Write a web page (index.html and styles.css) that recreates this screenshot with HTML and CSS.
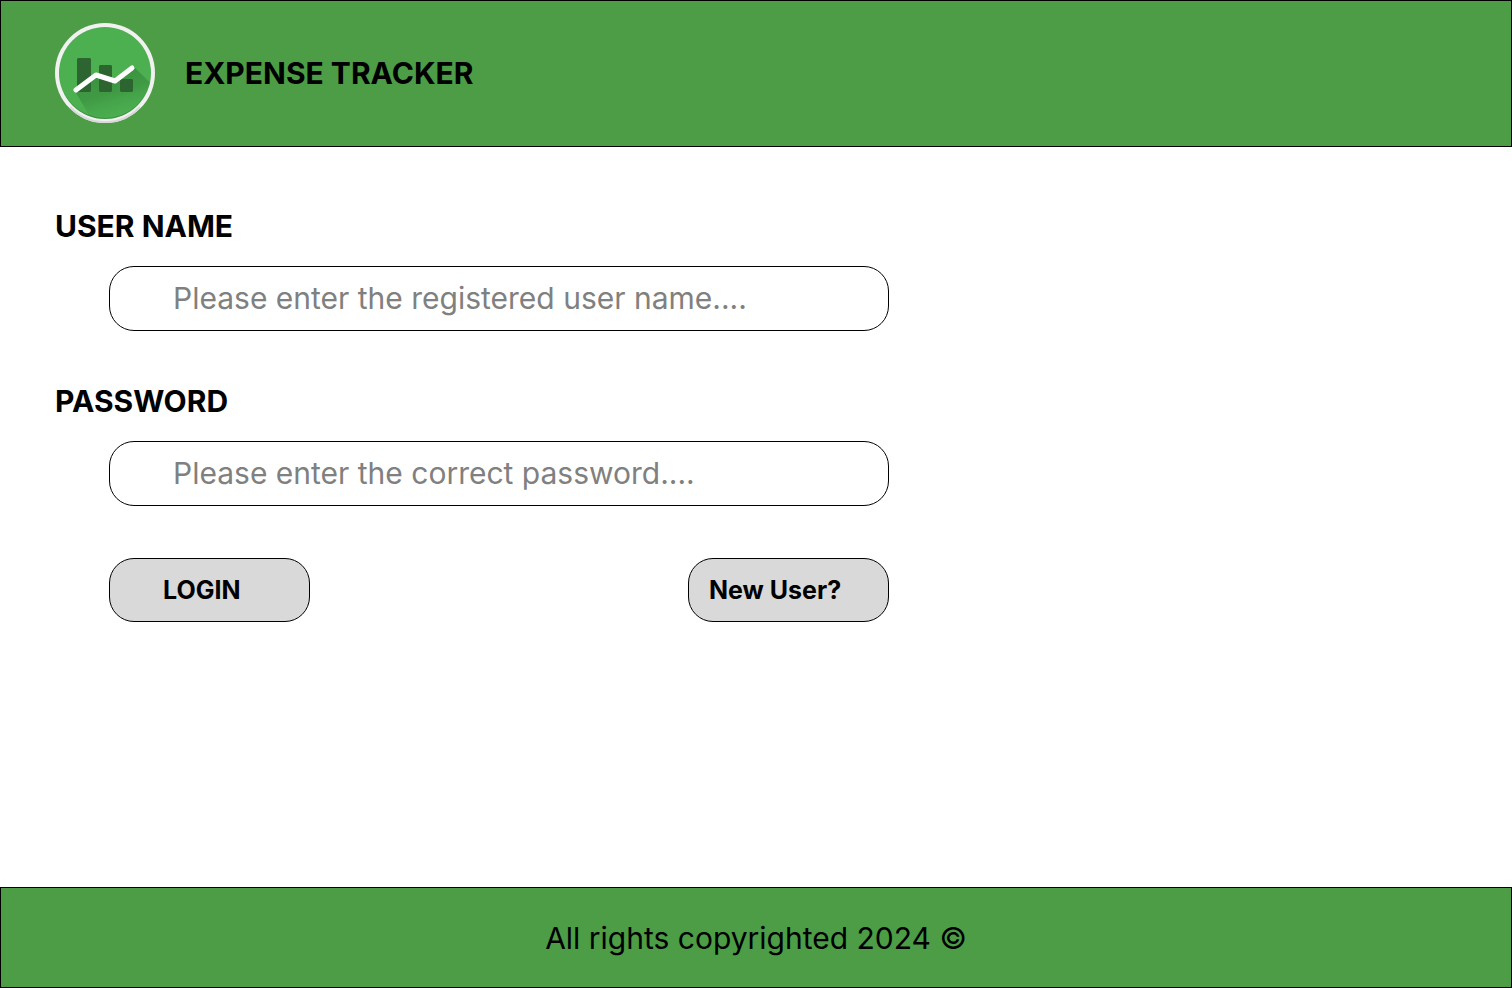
FILE: index.html
```html
<!DOCTYPE html>
<html lang="en">
<head>
<meta charset="utf-8">
<title>Expense Tracker</title>
<link rel="stylesheet" href="styles.css">
</head>
<body>
<header class="header">
  <svg class="logo" viewBox="0 0 100 100" aria-hidden="true">
    <defs>
      <linearGradient id="shade" gradientUnits="userSpaceOnUse" x1="44" y1="50" x2="58" y2="98"><stop offset="0" stop-color="#2f7d34" stop-opacity=".6"/><stop offset=".45" stop-color="#2f7d34" stop-opacity=".42"/><stop offset="1" stop-color="#3f9a44" stop-opacity="0"/></linearGradient>
      <linearGradient id="rim" x1="0" y1="0" x2="0" y2="1"><stop offset=".7" stop-color="#1f5f24" stop-opacity="0"/><stop offset="1" stop-color="#1f5f24" stop-opacity=".4"/></linearGradient>
      <clipPath id="disc"><circle cx="50" cy="50" r="46"/></clipPath>
    </defs>
    <circle cx="50" cy="50" r="50" fill="#f1f1f1"/>
    <path d="M15 84A48 48 0 0 0 85 84" fill="none" stroke="#d9d9d9" stroke-width="2"/>
    <circle cx="50" cy="50" r="46" fill="#4caf50"/>
    <path d="M20 68L41 52L60 58L79 44L120 84V120H50Z" fill="url(#shade)" clip-path="url(#disc)"/>
    <circle cx="50" cy="50" r="45.5" fill="none" stroke="url(#rim)" stroke-width="1"/>
    <path d="M23 35H35L36 36V68L35 69H23L22 68V36ZM45 42H56L57 43V68L56 69H45L44 68V43ZM66 56H77L78 57V68L77 69H66L65 68V57Z" fill="#2c652f"/>
    <path d="M21 67L41 52L60 58L77 45" fill="none" stroke="#fff" stroke-width="5" stroke-linecap="round" stroke-linejoin="round"/>
  </svg>
  <h1 class="title">EXPENSE TRACKER</h1>
</header>
<main class="main">
  <form class="form">
    <label class="label" for="user">USER NAME</label>
    <input class="field" id="user" type="text" placeholder="Please enter the registered user name....">
    <label class="label" for="pass">PASSWORD</label>
    <input class="field" id="pass" type="password" placeholder="Please enter the correct password....">
    <div class="actions">
      <button class="button login" type="submit">LOGIN</button>
      <button class="button register" type="button">New User?</button>
    </div>
  </form>
</main>
<footer class="footer">All rights copyrighted 2024 ©</footer>
</body>
</html>
```
FILE: styles.css
```css
* { box-sizing: border-box; }
body {
  margin: 0;
  min-height: 100vh;
  display: flex;
  flex-direction: column;
  background: #fff;
  color: #000;
  font-family: Inter, sans-serif;
}
.header {
  display: flex;
  align-items: center;
  gap: 30px;
  padding: 22px 54px 23px;
  background: #4c9d45;
  border: 1px solid #000;
}
.logo { width: 100px; height: 100px; }
.title { margin: 0; font-size: 30px; line-height: 36px; font-weight: 700; }
.main { flex: 1; padding: 61px 55px 0; }
.form { display: flex; flex-direction: column; max-width: 834px; }
.label { font-size: 30px; line-height: 36px; font-weight: 700; }
.field {
  margin: 22px 0 52px 54px;
  height: 65px;
  padding: 0 63px 2px;
  border: 1px solid #000;
  border-radius: 25px;
  background: #fff;
  color: #000;
  font: 400 30px/36px Inter, sans-serif;
}
.field::placeholder { color: #808080; opacity: 1; }
.actions { display: flex; justify-content: space-between; margin-left: 54px; }
.button {
  width: 201px;
  height: 64px;
  border: 1px solid #000;
  border-radius: 25px;
  background: #d9d9d9;
  color: #000;
  font: 700 25px/30px Inter, sans-serif;
  text-align: left;
}
.login { padding: 0 53px; }
.register { padding: 0 20px; }
.footer {
  padding: 32px 20px 31px;
  background: #4c9d45;
  border: 1px solid #000;
  font-size: 30px;
  line-height: 36px;
  text-align: center;
}
```
